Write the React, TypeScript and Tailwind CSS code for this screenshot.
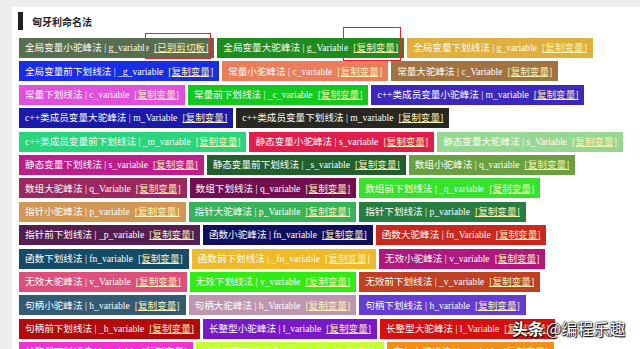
import React from 'react';

type Item = { name: string; v: string; bg: string; link?: string };

const rows: Item[][] = [
  [
    { name: '全局变量小驼峰法', v: 'g_variable', bg: 'bg-[#586e50]', link: '[已到剪切板]' },
    { name: '全局变量大驼峰法', v: 'g_Variable', bg: 'bg-[#1e8c1e]' },
    { name: '全局变量下划线法', v: 'g_variable', bg: 'bg-[#e1af3c]' },
  ],
  [
    { name: '全局变量前下划线法', v: '_g_variable', bg: 'bg-[#192de6]' },
    { name: '常量小驼峰法', v: 'c_variable', bg: 'bg-[#eb7d5a]' },
    { name: '常量大驼峰法', v: 'c_Variable', bg: 'bg-[#a07341]' },
  ],
  [
    { name: '常量下划线法', v: 'c_variable', bg: 'bg-[#e150dc]' },
    { name: '常量前下划线法', v: '_c_variable', bg: 'bg-[#14c81e]' },
    { name: 'c++类成员变量小驼峰法', v: 'm_variable', bg: 'bg-[#3c28be]' },
  ],
  [
    { name: 'c++类成员变量大驼峰法', v: 'm_Variable', bg: 'bg-[#1919aa]' },
    { name: 'c++类成员变量下划线法', v: 'm_variable', bg: 'bg-[#282823]' },
  ],
  [
    { name: 'c++类成员变量前下划线法', v: '_m_variable', bg: 'bg-[#28d77d]' },
    { name: '静态变量小驼峰法', v: 's_variable', bg: 'bg-[#e11e4b]' },
    { name: '静态变量大驼峰法', v: 's_Variable', bg: 'bg-[#96d791]' },
  ],
  [
    { name: '静态变量下划线法', v: 's_variable', bg: 'bg-[#be1e8c]' },
    { name: '静态变量前下划线法', v: '_s_variable', bg: 'bg-[#235f2d]' },
    { name: '数组小驼峰法', v: 'q_variable', bg: 'bg-[#69a041]' },
  ],
  [
    { name: '数组大驼峰法', v: 'q_Variable', bg: 'bg-[#9b285f]' },
    { name: '数组下划线法', v: 'q_variable', bg: 'bg-[#730f50]' },
    { name: '数组前下划线法', v: '_q_variable', bg: 'bg-[#37e12d]' },
  ],
  [
    { name: '指针小驼峰法', v: 'p_variable', bg: 'bg-[#d29655]' },
    { name: '指针大驼峰法', v: 'p_Variable', bg: 'bg-[#37b45a]' },
    { name: '指针下划线法', v: 'p_variable', bg: 'bg-[#287d41]' },
  ],
  [
    { name: '指针前下划线法', v: '_p_variable', bg: 'bg-[#551e50]' },
    { name: '函数小驼峰法', v: 'fn_variable', bg: 'bg-[#0f0f5f]' },
    { name: '函数大驼峰法', v: 'fn_Variable', bg: 'bg-[#c8281e]' },
  ],
  [
    { name: '函数下划线法', v: 'fn_variable', bg: 'bg-[#144b69]' },
    { name: '函数前下划线法', v: '_fn_variable', bg: 'bg-[#f0b928]' },
    { name: '无效小驼峰法', v: 'v_variable', bg: 'bg-[#af197d]' },
  ],
  [
    { name: '无效大驼峰法', v: 'v_Variable', bg: 'bg-[#dc507d]' },
    { name: '无效下划线法', v: 'v_variable', bg: 'bg-[#32eb14]' },
    { name: '无效前下划线法', v: '_v_variable', bg: 'bg-[#be4123]' },
  ],
  [
    { name: '句柄小驼峰法', v: 'h_variable', bg: 'bg-[#325a73]' },
    { name: '句柄大驼峰法', v: 'h_Variable', bg: 'bg-[#be96af]' },
    { name: '句柄下划线法', v: 'h_variable', bg: 'bg-[#643cd2]' },
  ],
  [
    { name: '句柄前下划线法', v: '_h_variable', bg: 'bg-[#b40a0a]' },
    { name: '长整型小驼峰法', v: 'l_variable', bg: 'bg-[#7819c8]' },
    { name: '长整型大驼峰法', v: 'l_Variable', bg: 'bg-[#d70f0f]' },
  ],
  [
    { name: '长整型下划线法', v: 'l_variable', bg: 'bg-[#f032d2]' },
    { name: '长整型前下划线法', v: '_l_variable', bg: 'bg-[#c3ff32]' },
    { name: '布尔小驼峰法', v: 'b_variable', bg: 'bg-[#f09114]' },
  ],
];

// red boxes are annotations drawn on the screenshot, not part of the page
function Mark({ which }: { which: string }) {
  if (which === '0-0')
    return <span className="pointer-events-none absolute right-[3px] -top-[5px] h-[26px] w-[66px] border-[1.5px] border-[#e3262b]" />;
  if (which === '0-1')
    return <span className="pointer-events-none absolute right-[3px] -top-[11px] h-[34px] w-[58px] border-[1.5px] border-[#e3262b]" />;
  return null;
}

function VarButton({ item, id }: { item: Item; id: string }) {
  return (
    <div
      className={`relative flex h-[20px] items-center whitespace-nowrap px-[6px] text-[9.6px] leading-none text-white ${item.bg}`}
    >
      <span>
        {item.name} | {item.v}
      </span>
      <span className="ml-[5px] text-[#fbf3b4] underline">{item.link ?? '[复制变量]'}</span>
      <Mark which={id} />
    </div>
  );
}

export default function App() {
  return (
    <div
      className="relative h-[349px] overflow-hidden bg-[#eeeeee] pl-[12px] pt-[7px]"
      style={{ fontFamily: '"Liberation Serif", "Noto Sans CJK SC", serif' }}
    >
      <div className="h-full bg-white pl-[6px] pt-[5px]">
        <div className="flex h-[18px] items-center">
          <div className="h-[18px] w-[5px] bg-[#222222]" />
          <h2
            className="ml-[9px] text-[10px] font-bold text-[#222222]"
            style={{ fontFamily: '"Noto Sans CJK SC", sans-serif' }}
          >
            匈牙利命名法
          </h2>
        </div>
        <div className="mt-[8px] flex flex-col gap-[3.4px] pl-[1px]">
          {rows.map((row, r) => (
            <div key={r} className="flex gap-[3px]">
              {row.map((item, i) => (
                <VarButton key={i} item={item} id={`${r}-${i}`} />
              ))}
            </div>
          ))}
        </div>
      </div>

      <div
        className="absolute left-[512px] top-[320px] flex items-center gap-[2px] whitespace-nowrap text-[16px] leading-none text-white"
        style={{
          fontFamily: '"Noto Sans CJK SC", sans-serif',
          textShadow: '0 0 2px #000, 0 0 1px #000, 1px 1px 1px #000',
        }}
      >
        <span className="font-bold">头条</span>
        <span>@编程乐趣</span>
      </div>
    </div>
  );
}
